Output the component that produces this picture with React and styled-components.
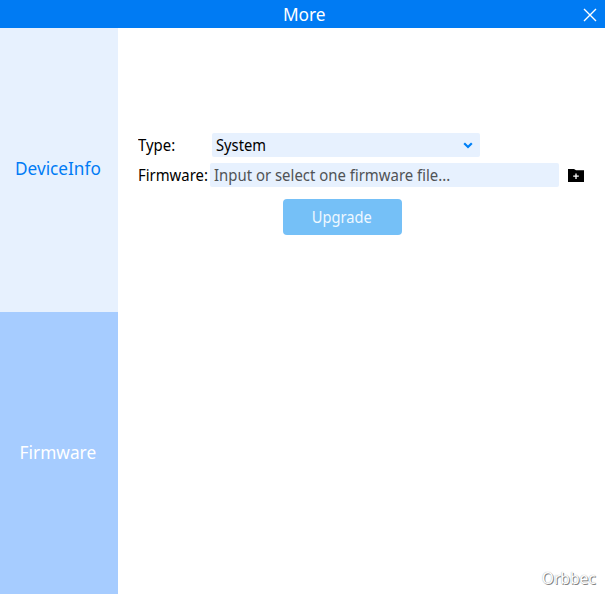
import React from "react";
import styled, { createGlobalStyle } from "styled-components";

const GlobalStyle = createGlobalStyle`
  * { box-sizing: border-box; }
  body { margin: 0; font-family: "Noto Sans", sans-serif; background: #fff; }
`;
const Window = styled.div`
  width: 605px;
  height: 594px;
  display: flex;
  flex-direction: column;
  overflow: hidden;
`;
const Condensed = styled.span`
  display: inline-block;
  white-space: nowrap;
  transform: scaleX(${(p) => p.$scale ?? 0.932});
  transform-origin: ${(p) => p.$origin ?? "left"} center;
`;
const TitleBar = styled.header`
  height: 28px;
  flex: none;
  display: grid;
  grid-template-columns: 30px 1fr 30px;
  align-items: center;
  background: #007bf3;
  color: #fff;
`;
const Title = styled.h1`
  grid-column: 2;
  margin: 0;
  padding: 0 0 0 3px;
  text-align: center;
  font-size: 18px;
  line-height: 26px;
  font-weight: 400;
`;
const CloseButton = styled.button`
  border: 0;
  padding: 2px 0 0;
  background: none;
  display: flex;
  justify-content: center;
`;
const Body = styled.div`
  flex: 1;
  display: flex;
`;
const Sidebar = styled.nav`
  width: 118px;
  display: grid;
  grid-template-rows: 284px 282px;
`;
const Tab = styled.button`
  border: 0;
  padding: 0 2px ${(p) => (p.$active ? 2 : 4)}px 0;
  font: 400 18px "Noto Sans", sans-serif;
  color: ${(p) => (p.$active ? "#fff" : "#007bf5")};
  background: ${(p) => (p.$active ? "#a6ccff" : "#e7f1fe")};
`;
const Content = styled.main`
  flex: 1;
  display: flex;
  flex-direction: column;
  padding: 105px 20px 0;
`;
const Row = styled.div`
  display: flex;
  height: 24px;
  margin-bottom: 6px;
  align-items: center;
`;
const Label = styled.label`
  width: ${(p) => p.$width}px;
  flex: none;
  font-size: 16px;
  line-height: 24px;
  white-space: nowrap;
  color: #000;
`;
const Field = styled.div`
  width: ${(p) => p.$width}px;
  height: 24px;
  padding: 0 7px 0 4px;
  display: flex;
  align-items: center;
  justify-content: space-between;
  background: #e7f1fe;
  border-radius: 2px;
  font-size: 16px;
  line-height: 24px;
  color: ${(p) => (p.$muted ? "#505356" : "#000")};
`;
const FolderButton = styled.button`
  border: 0;
  padding: 0;
  margin-left: 9px;
  background: none;
  display: flex;
`;
const UpgradeButton = styled.button`
  width: 119px;
  height: 36px;
  margin: 6px 0 0 145px;
  border: 0;
  border-radius: 4px;
  padding: 0 2px 0 0;
  background: #75c0f7;
  color: #eef8ff;
  font: 400 16px "Noto Sans", sans-serif;
`;
const Brand = styled.footer`
  margin: auto -11px 3px auto;
  font-size: 16px;
  line-height: 26px;
  color: #fff;
  text-shadow: 1px 1px 0 #858585, 0 0 1px #999;
`;

export default function App() {
  return (
    <Window>
      <GlobalStyle />
      <TitleBar>
        <Title><Condensed $scale={0.96} $origin="center">More</Condensed></Title>
        <CloseButton aria-label="Close">
          <svg width="14" height="14" viewBox="0 0 14 14" stroke="#fff" strokeWidth="1.4">
            <path d="M1 1L13 13M13 1L1 13" />
          </svg>
        </CloseButton>
      </TitleBar>
      <Body>
        <Sidebar>
          <Tab><Condensed $scale={0.955} $origin="center">DeviceInfo</Condensed></Tab>
          <Tab $active><Condensed $scale={0.96} $origin="center">Firmware</Condensed></Tab>
        </Sidebar>
        <Content>
          <Row>
            <Label $width={74}><Condensed>Type:</Condensed></Label>
            <Field $width={268}>
              <Condensed $scale={0.92}>System</Condensed>
              <svg width="10" height="8" viewBox="0 0 10 8" fill="none" stroke="#0080f7" strokeWidth="2.2">
                <path d="M1.2 2.2L5 6L8.8 2.2" />
              </svg>
            </Field>
          </Row>
          <Row>
            <Label $width={72}><Condensed $scale={0.93}>Firmware:</Condensed></Label>
            <Field $width={349} $muted><Condensed>Input or select one firmware file...</Condensed></Field>
            <FolderButton aria-label="Browse">
              <svg width="16" height="14" viewBox="0 0 16 14">
                <path d="M0 1H6L8 2.2H16V14H0Z" fill="#000" />
                <path d="M8 5.5V11M5.2 8.2H10.8" stroke="#fff" strokeWidth="1.3" />
              </svg>
            </FolderButton>
          </Row>
          <UpgradeButton><Condensed $scale={0.915} $origin="center">Upgrade</Condensed></UpgradeButton>
          <Brand><Condensed $scale={0.97} $origin="center">Orbbec</Condensed></Brand>
        </Content>
      </Body>
    </Window>
  );
}
